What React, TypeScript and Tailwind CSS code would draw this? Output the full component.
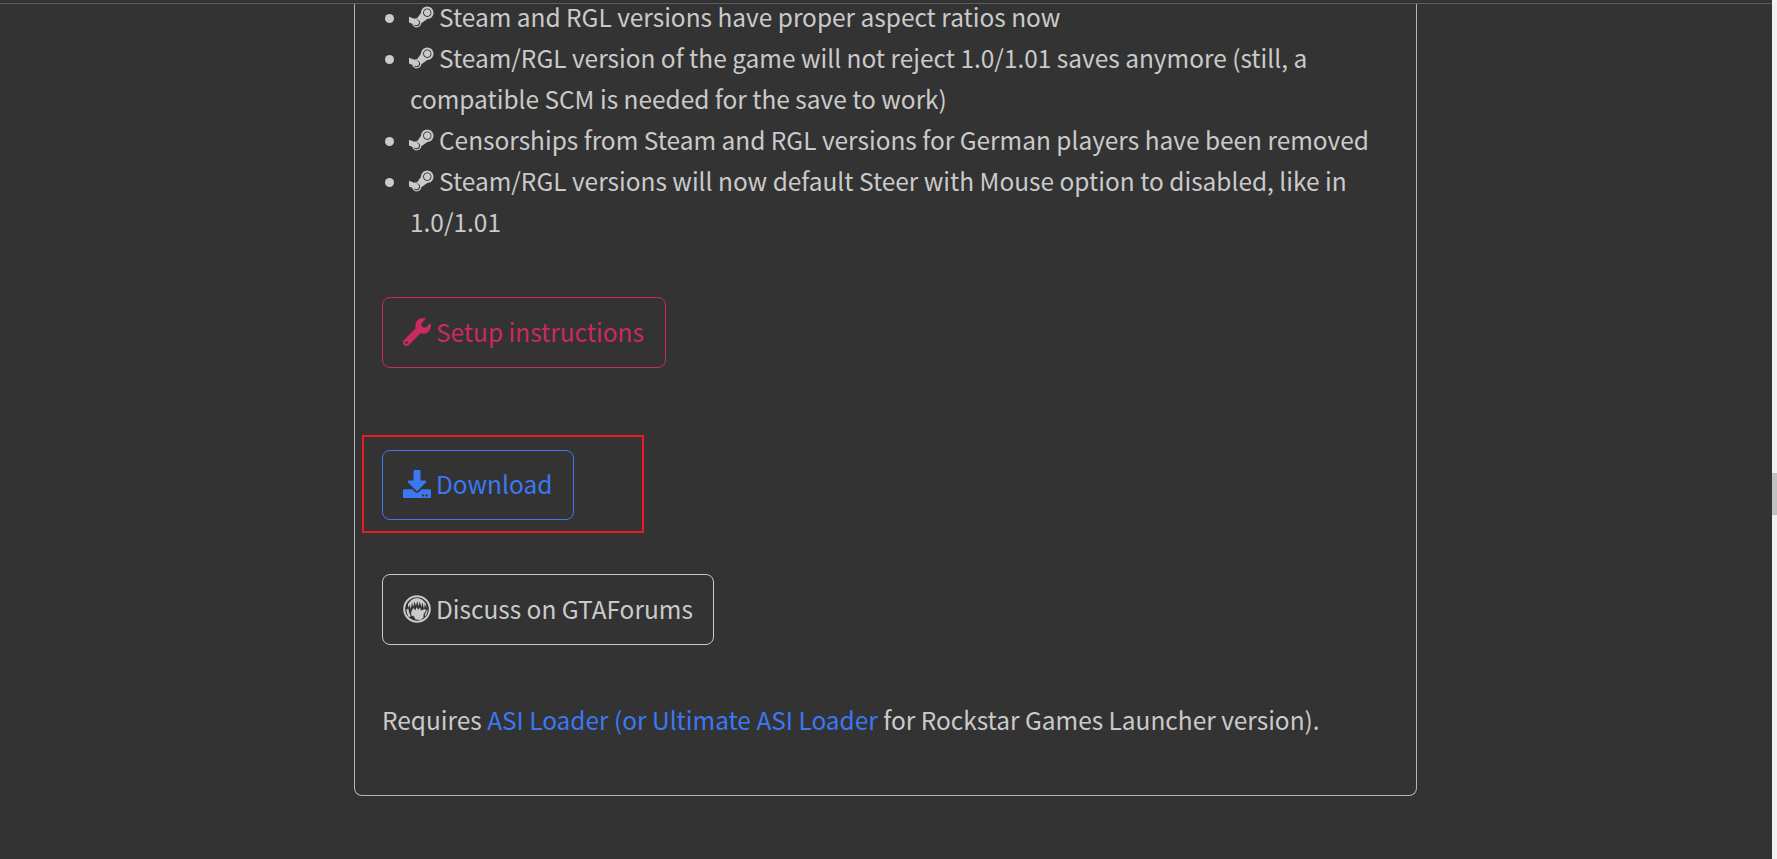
import { FaDownload, FaSteamSymbol, FaWrench } from "react-icons/fa";

const changes = [
  "Steam and RGL versions have proper aspect ratios now",
  "Steam/RGL version of the game will not reject 1.0/1.01 saves anymore (still, a compatible SCM is needed for the save to work)",
  "Censorships from Steam and RGL versions for German players have been removed",
  "Steam/RGL versions will now default Steer with Mouse option to disabled, like in 1.0/1.01",
];

function ForumsIcon() {
  return (
    <svg viewBox="0 0 28 28" className="h-[28px] w-[28px] shrink-0" fill="currentColor">
      <circle cx="14" cy="14" r="12.8" fill="none" stroke="currentColor" strokeWidth="2" />
      <path d="M5 9C7.500 5 10.500 3 14 3S20.500 5 23 9L23.500 13 21.800 9 21 14 19.500 7.500 18.300 12 16.800 6.500 15.600 11 14.200 6 13 11 11.500 6.500 10.300 12 9 7.500 7.800 14 6.500 10 5 13z" />
      <path d="M8.500 16L10.500 13 12.300 15.500 13.500 12 15.200 14.800 17 12.500 18 15.500 22 14 23 15.500 20.500 19.500 20.500 22.500 17.500 25 12.500 24.500 11 21.500 8 20z" />
      <path d="M3.500 14.500l1.800-1 .9 4 1.500 3.500-1.700 1.500c-1.500-2-2.500-5.300-2.500-8zM24.500 14c.2 2.800-.6 5.400-2 7.300l-.8-1.300 1.800-4z" />
    </svg>
  );
}

export default function App() {
  return (
    <div className="flex h-screen overflow-hidden bg-[#333333] text-[24.45px] leading-[41px] text-[#cacaca] [font-family:'Noto_Sans_CJK_JP','Noto_Sans',sans-serif]">
      <div className="flex min-w-0 flex-1 flex-col">
        <div className="h-[4px] shrink-0 border-b border-[#5a5d60] bg-[#333333]" />
        <main className="ml-[354px] w-[1063px] shrink-0 rounded-b-[8px] border border-t-0 border-[#b5b5b5] px-[27px] pb-[55px]">
          <ul className="mt-[-8px] list-disc pl-[28px]">
            {changes.map((text) => (
              <li key={text}>
                <FaSteamSymbol className="mr-[5.500px] ml-[-1px] inline-block h-[28px] w-[24.500px] align-[-4px]" />
                {text}
              </li>
            ))}
          </ul>

          <div className="mt-[55px]">
            <a className="inline-flex h-[71px] items-center gap-[5px] rounded-[8px] border border-[#cb2a5e] pr-[21px] pb-[2px] pl-[20px] text-[#cb2a5e]">
              <FaWrench className="h-[28px] w-[28px]" />
              Setup instructions
            </a>
          </div>

          <div className="relative mt-[82px]">
            <a className="inline-flex h-[70px] items-center gap-[5px] rounded-[8px] border border-[#3b78f2] pr-[21px] pb-[3px] pl-[20px] text-[#3b78f2]">
              <FaDownload className="h-[28px] w-[28px]" />
              Download
            </a>
            <div className="absolute top-[-15px] left-[-20px] h-[98px] w-[282px] border-2 border-[#ed1c24]" />
          </div>

          <div className="mt-[54px]">
            <a className="inline-flex h-[71px] items-center gap-[5px] rounded-[8px] border border-[#cacaca] px-[20px] pb-[2px]">
              <ForumsIcon />
              Discuss on GTAForums
            </a>
          </div>

          <p className="mt-[54px]">
            Requires <a className="text-[#3b78f2]">ASI Loader (or Ultimate ASI Loader</a> for Rockstar Games Launcher version).
          </p>
        </main>
      </div>
      <div className="flex h-full w-[5px] shrink-0 flex-col bg-[#f1f1f1] pt-[473px]">
        <div className="h-[42px] w-full bg-[#c1c1c1]" />
      </div>
    </div>
  );
}
